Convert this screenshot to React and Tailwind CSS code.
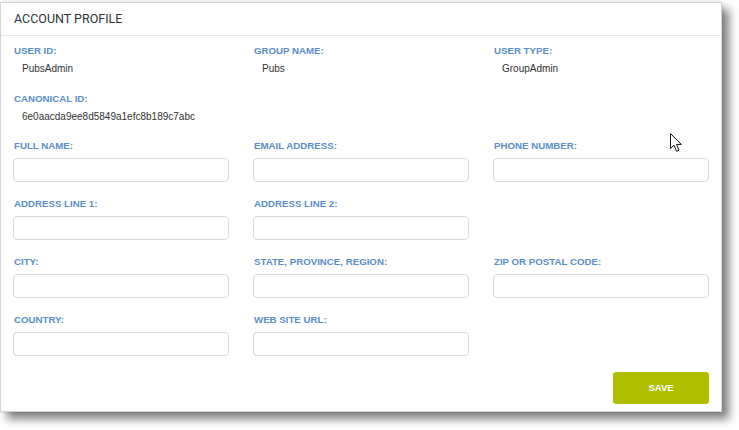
import React from "react";

const labelCls =
  "block pl-[1px] h-[12px] leading-[12px] text-[9.7px] font-bold uppercase text-[#5a8ec8] whitespace-nowrap";
const valueCls =
  "mt-[5px] pl-[9px] h-[14px] leading-[14px] text-[10px] text-[#333333] whitespace-nowrap";

function Field({ label }) {
  return (
    <div className="flex flex-col">
      <label className={labelCls}>{label}</label>
      <input
        type="text"
        className="mt-[6px] h-[24px] w-[216px] rounded-[4px] border border-[#dadada] bg-white outline-none"
      />
    </div>
  );
}

function Info({ label, value }) {
  return (
    <div className="flex flex-col">
      <span className={labelCls}>{label}</span>
      <span className={valueCls}>{value}</span>
    </div>
  );
}

function Cursor() {
  return (
    <svg
      className="absolute left-[670px] top-[133px]"
      width="14"
      height="20"
      viewBox="0 0 14 20"
    >
      <path
        d="M0.5 0.5 L0.5 15.5 L4 12.2 L6.6 18.3 L9 17.3 L6.5 11.4 L11.3 11.4 Z"
        fill="#ffffff"
        stroke="#111111"
        strokeWidth="1"
        strokeLinejoin="miter"
      />
    </svg>
  );
}

export default function App() {
  return (
    <div
      className="relative w-[739px] h-[430px] bg-white pt-[2px]"
      style={{ fontFamily: '"Liberation Sans", Arial, sans-serif' }}
    >
      <div className="w-[722px] h-[410px] bg-white border border-[#d4d4d4] shadow-[7px_7px_9px_rgba(0,0,0,0.5),0_0_3px_rgba(0,0,0,0.15)] flex flex-col">
        <div className="h-[33px] border-b border-[#e6e6e6] flex items-center pl-[13px] shrink-0">
          <span
            className="text-[12.5px] text-[#333333] font-normal"
            style={{ fontFamily: "Roboto, sans-serif" }}
          >
            ACCOUNT PROFILE
          </span>
        </div>
        <div className="pl-[12px] pt-[9px]">
          <div className="grid grid-cols-[216px_216px_216px] gap-x-6">
            <Info label="User ID:" value="PubsAdmin" />
            <Info label="Group Name:" value="Pubs" />
            <Info label="User Type:" value="GroupAdmin" />
          </div>
          <div className="mt-[17px]">
            <Info label="Canonical ID:" value="6e0aacda9ee8d5849a1efc8b189c7abc" />
          </div>
          <div className="mt-[16px] grid grid-cols-[216px_216px_216px] gap-x-6 gap-y-[16px]">
            <Field label="Full Name:" />
            <Field label="Email Address:" />
            <Field label="Phone Number:" />
            <Field label="Address Line 1:" />
            <Field label="Address Line 2:" />
            <div />
            <Field label="City:" />
            <Field label="State, Province, Region:" />
            <Field label="Zip or Postal Code:" />
            <Field label="Country:" />
            <Field label="Web Site URL:" />
            <div />
          </div>
          <div className="mt-[16px] w-[696px] flex justify-end">
            <button className="w-[96px] h-[32px] rounded-[3px] bg-[#b0be00] text-white text-[9.5px] font-bold">
              SAVE
            </button>
          </div>
        </div>
      </div>
      <Cursor />
    </div>
  );
}
